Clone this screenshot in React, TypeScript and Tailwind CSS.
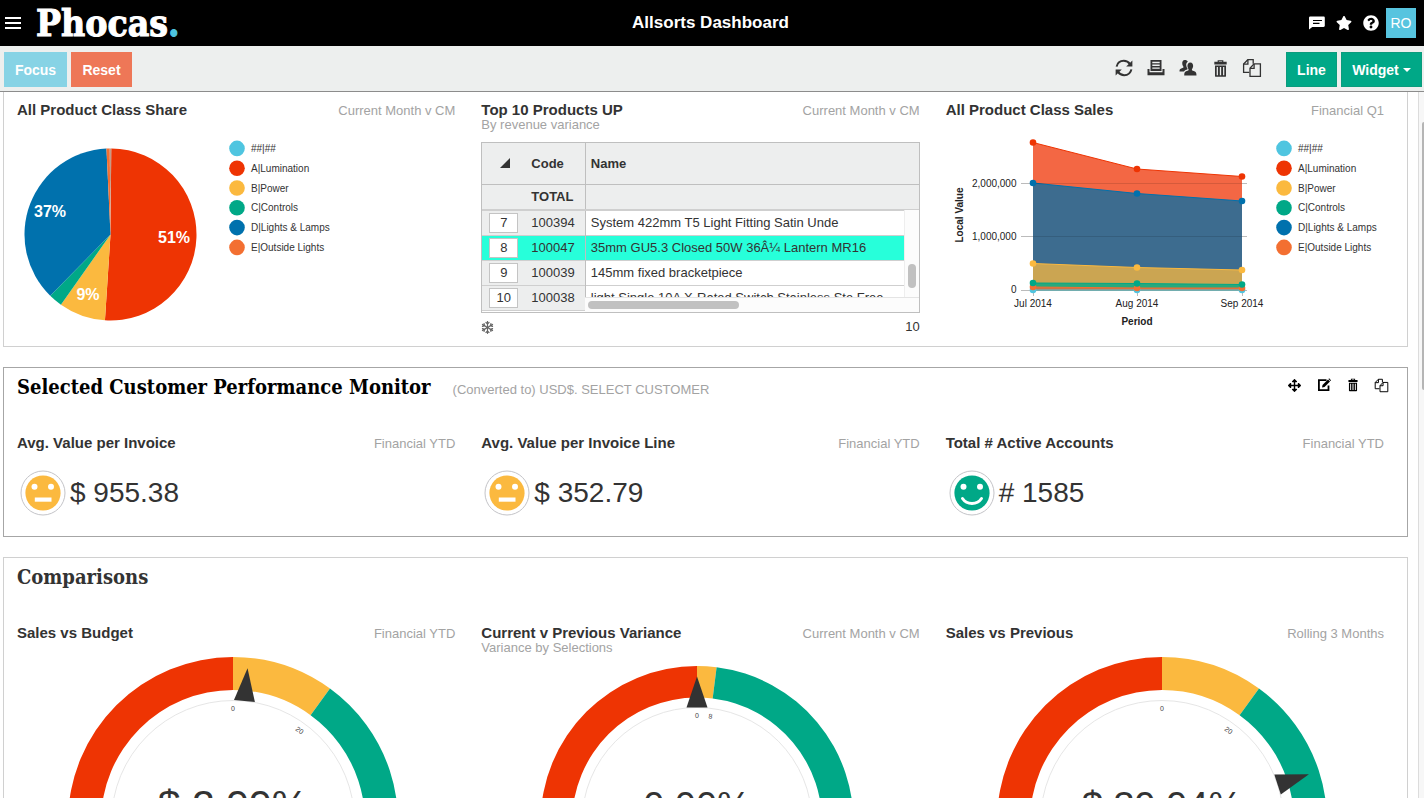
import React from "react";
import { FaStar, FaQuestionCircle, FaArrowsAlt, FaRegSnowflake } from "react-icons/fa";

const RED = "#ee3403";
const AMBER = "#fbb93f";
const GREEN = "#00a887";
const BLUE = "#0071ad";
const CYAN = "#4fc5e0";
const ORANGE = "#f36f31";

const SERIES = [
  { label: "##|##", color: CYAN },
  { label: "A|Lumination", color: RED },
  { label: "B|Power", color: AMBER },
  { label: "C|Controls", color: GREEN },
  { label: "D|Lights & Lamps", color: BLUE },
  { label: "E|Outside Lights", color: ORANGE },
];

function polar(cx: number, cy: number, r: number, deg: number): [number, number] {
  const a = (deg * Math.PI) / 180;
  return [cx + r * Math.sin(a), cy - r * Math.cos(a)];
}

/* ---------- icons ---------- */

function RefreshIcon() {
  return (
    <svg width="20" height="20" viewBox="0 0 20 20" fill="none" stroke="currentColor" strokeWidth="2">
      <path d="M2.6 8.6C3.4 5 6.4 2.8 9.8 2.8c2.700 0 4.800 1.300 6.200 3.300" />
      <path d="M17.4 11.4c-.8 3.600-3.800 5.800-7.200 5.800-2.700 0-4.800-1.300-6.200-3.300" />
      <path d="M18.400 2.400v6.200h-6.200z" fill="currentColor" stroke="none" />
      <path d="M1.600 17.600v-6.200h6.200z" fill="currentColor" stroke="none" />
    </svg>
  );
}

function PrintIcon() {
  return (
    <svg width="20" height="20" viewBox="0 0 20 20" fill="currentColor">
      <path fillRule="evenodd" d="M4.500 2h11v11h-11zM6.300 3.800v1.400h7.400V3.800zm0 2.800V8h7.400V6.600zm0 2.900v1.300h7.400V9.500z" />
      <path d="M1.500 11h2v3.200h13V11h2v6.200h-17z" />
    </svg>
  );
}

function PeopleIcon() {
  return (
    <svg width="20" height="20" viewBox="0 0 20 20" fill="currentColor">
      <path d="M6.800 2c1.500 0 2.600.7 3 1.700C8.400 4.600 8 6 8.300 7.800c.1 1 .6 1.900 1.200 2.600v.9c-1.300.6-2.700 1-3.600 2.100H1.500c0-2 .6-2.500 2.300-3.100 1-.4 1.700-.7 1.700-1.300 0-.6-.9-1.200-1.200-2.800C3.900 3.700 4.900 2 6.800 2z" />
      <path d="M12.300 4.500c2 0 3.100 1.700 2.800 4-.2 1.600-1.200 2.400-1.200 3.200 0 .7.7.9 1.800 1.300 1.900.7 2.800 1.300 2.800 4.500H6.200c0-3 .8-3.700 2.600-4.400 1.100-.4 1.800-.7 1.800-1.400 0-.8-.9-1.600-1.100-3.200-.3-2.300.8-4 2.800-4z" />
    </svg>
  );
}

function TrashIcon({ size }: { size: number }) {
  return (
    <svg width={size} height={size} viewBox="0 0 20 20" fill="currentColor">
      <path d="M7 1.200h6v1.600h3.500v3h-13v-3H7zM8.300 2.300v.7h3.400v-.7z" fillRule="evenodd" />
      <path
        fillRule="evenodd"
        d="M4.200 6.800h11.600v11c0 .6-.4 1-1 1H5.200c-.6 0-1-.4-1-1zM6 8.300v8.900h1.300V8.300zm3.300 0v8.900h1.400V8.300zm3.400 0v8.900H14V8.300z"
      />
    </svg>
  );
}

function PagesIcon({ size }: { size: number }) {
  return (
    <svg width={size} height={size} viewBox="0 0 20 20" fill="none" stroke="currentColor" strokeWidth="1.300">
      <path d="M7.300 14.300H1.600V6l4.200-4.300h5.400v4" />
      <path d="M1.600 6.200h4.300V1.700" />
      <path d="M8 10.200l4-4.300h6.400v12.400H8z" />
      <path d="M8 10.300h4.100V5.900" />
    </svg>
  );
}

function ChatIcon() {
  return (
    <svg width="18" height="18" viewBox="0 0 18 18">
      <path d="M2.500 2.500h13c.8 0 1.300.5 1.300 1.200v8.100c0 .7-.5 1.200-1.300 1.200H4.300L1 15.600V3.700c0-.7.700-1.200 1.500-1.200z" fill="#fff" />
      <path d="M5 6.500h9M5 9.300h6.500" stroke="#000" strokeWidth="1.200" />
    </svg>
  );
}

function EditIcon() {
  return (
    <svg width="14" height="14" viewBox="0 0 14 14" fill="none" stroke="currentColor">
      <path d="M9.500 2.200H1.900v10h9.600V7.500" strokeWidth="1.800" />
      <path d="M5 9.400l.5-2.500L11 1.400l2 2-5.500 5.500z" fill="currentColor" stroke="none" />
      <path d="M11.500.9l.6-.6 2 2-.6.600z" fill="currentColor" stroke="none" />
    </svg>
  );
}

function Face({ color, happy }: { color: string; happy?: boolean }) {
  return (
    <svg width="46" height="46" viewBox="0 0 46 46">
      <circle cx="23" cy="23" r="22" fill="#fff" stroke="#c4c4c8" />
      <circle cx="23" cy="23" r="17.600" fill={color} />
      <circle cx="14.500" cy="16.800" r="3" fill="#fff" />
      <circle cx="31" cy="16.800" r="3" fill="#fff" />
      {happy ? (
        <path d="M13.500 28.500c4.500 6.700 14.500 6.700 19 0" fill="none" stroke="#fff" strokeWidth="3" strokeLinecap="round" />
      ) : (
        <rect x="14.800" y="27.500" width="16.700" height="4.200" fill="#fff" />
      )}
    </svg>
  );
}

/* ---------- charts ---------- */

function Legend({ x }: { x: number }) {
  return (
    <g fontSize="10" fill="#333">
      {SERIES.map((s, i) => (
        <g key={s.label}>
          <circle cx={x} cy={15.4 + i * 19.8} r="7.800" fill={s.color} />
          <text x={x + 14} y={19 + i * 19.8}>
            {s.label}
          </text>
        </g>
      ))}
    </g>
  );
}

const SLICES = [
  { from: 0.5, to: 183.7, color: RED },
  { from: 183.7, to: 215.2, color: AMBER },
  { from: 215.2, to: 224.5, color: GREEN },
  { from: 224.5, to: 357.3, color: BLUE },
  { from: 357.3, to: 359.5, color: ORANGE },
  { from: 359.5, to: 360.5, color: "#c79a86" },
];

function PieChart() {
  const cx = 93.5;
  const cy = 101.5;
  const r = 86;
  return (
    <svg className="block h-[200px] w-[438px] max-w-full" viewBox="0 0 438 200" role="img" aria-label="All Product Class Share">
      {SLICES.map((s) => {
        const [x1, y1] = polar(cx, cy, r, s.from);
        const [x2, y2] = polar(cx, cy, r, s.to);
        const large = s.to - s.from > 180 ? 1 : 0;
        return <path key={s.from} d={`M${cx} ${cy}L${x1} ${y1}A${r} ${r} 0 ${large} 1 ${x2} ${y2}Z`} fill={s.color} />;
      })}
      <g fontSize="16" fontWeight="700" fill="#fff" textAnchor="middle">
        <text x="157" y="110">51%</text>
        <text x="33" y="84">37%</text>
        <text x="71" y="167">9%</text>
      </g>
      <Legend x={220} />
    </svg>
  );
}

const XS = [87, 191, 296];
const AREAS = [
  { ys: [9.5, 36, 43.5], fill: "#f36744", dot: RED },
  { ys: [50, 60.5, 68], fill: "#3d6c8f", dot: BLUE },
  { ys: [130.5, 134.5, 137], fill: "#cba552", dot: AMBER },
  { ys: [150, 150.5, 151.5], fill: "#28a97c", dot: GREEN },
  { ys: [154, 155, 155], fill: "#cf7245", dot: ORANGE },
  { ys: [157, 157, 157], fill: "#8f9fa0", dot: CYAN },
];

function AreaChart() {
  return (
    <svg className="block h-[200px] w-[438px] max-w-full" viewBox="0 0 438 200" role="img" aria-label="All Product Class Sales">
      <path d="M75 50.500h226M75 103.500h226M75 157.500h226" stroke="#bbb" />
      <path d="M87.500 157v6M191.500 157v6M296.500 157v6" stroke="#bbb" />
      {AREAS.map((a) => (
        <g key={a.dot}>
          <path d={`M${XS[0]} ${a.ys[0]}L${XS[1]} ${a.ys[1]}L${XS[2]} ${a.ys[2]}V157.500H${XS[0]}Z`} fill={a.fill} />
          <path d={`M${XS[0]} ${a.ys[0]}L${XS[1]} ${a.ys[1]}L${XS[2]} ${a.ys[2]}`} fill="none" stroke={a.dot} />
        </g>
      ))}
      <path d="M87 50.500h209M87 103.500h209" stroke="#000" strokeOpacity="0.120" />
      {[...AREAS].reverse().map((a) => (
        <g key={a.dot} fill={a.dot}>
          {XS.map((x, i) => (
            <circle key={x} cx={x} cy={a.ys[i]} r="3.300" />
          ))}
        </g>
      ))}
      <g fontSize="10" fill="#222">
        <g textAnchor="end">
          <text x="70.500" y="54">2,000,000</text>
          <text x="70.500" y="107">1,000,000</text>
          <text x="70.500" y="160">0</text>
        </g>
        <g textAnchor="middle">
          <text x="87" y="174">Jul 2014</text>
          <text x="191" y="174">Aug 2014</text>
          <text x="296" y="174">Sep 2014</text>
          <text x="191" y="192" fontWeight="700">Period</text>
          <text x="17" y="82" fontWeight="700" transform="rotate(-90 17 82)">Local Value</text>
        </g>
      </g>
      <Legend x={338} />
    </svg>
  );
}

interface GaugeProps {
  cy: number;
  r: number;
  inner: number;
  ring: number;
  mark: number;
  markLabel: string;
  needle: number;
  value: string;
  size: number;
}

function Gauge({ cy, r, inner, ring, mark, markLabel, needle, value, size }: GaugeProps) {
  const cx = 216;
  const bands = [
    { from: -180, to: 0, color: RED },
    { from: 0, to: mark, color: AMBER },
    { from: mark, to: 179, color: GREEN },
  ];
  return (
    <svg className="block h-[340px] w-[438px] max-w-full" viewBox="0 0 438 340" role="img" aria-label={value}>
      {bands.map((b) => {
        const [ax, ay] = polar(cx, cy, r, b.from);
        const [bx, by] = polar(cx, cy, r, b.to);
        const [px, py] = polar(cx, cy, inner, b.to);
        const [qx, qy] = polar(cx, cy, inner, b.from);
        return (
          <path
            key={b.color}
            fill={b.color}
            d={`M${ax} ${ay}A${r} ${r} 0 0 1 ${bx} ${by}L${px} ${py}A${inner} ${inner} 0 0 0 ${qx} ${qy}Z`}
          />
        );
      })}
      <circle cx={cx} cy={cy} r={ring} fill="#fff" stroke="#e6e6e6" />
      <g fontSize="7" fill="#444" textAnchor="middle">
        <text x={cx} y={cy - ring + 10.5}>0</text>
        <text x={cx} y={cy - ring + 10.5} transform={`rotate(${mark} ${cx} ${cy})`}>
          {markLabel}
        </text>
      </g>
      <path
        d={`M${cx} ${cy - r + 10.5}L${cx - 10.5} ${cy - ring}H${cx + 10.5}Z`}
        fill="#333"
        transform={`rotate(${needle} ${cx} ${cy})`}
      />
      <text x={cx} y="163" fontSize={size} fill="#333" textAnchor="middle">
        {value}
      </text>
    </svg>
  );
}

/* ---------- layout pieces ---------- */

interface WidgetProps {
  title: string;
  period: string;
  subtitle?: string;
  children: React.ReactNode;
}

function Widget({ title, period, subtitle, children }: WidgetProps) {
  return (
    <section className="min-w-0">
      <header className="flex min-h-8 items-start justify-between">
        <div>
          <h3 className="text-[15px] leading-[18px] font-bold text-[#333]">{title}</h3>
          {subtitle && <p className="text-[13px] leading-3 text-[#a3a3a3]">{subtitle}</p>}
        </div>
        <span className="text-[13px] leading-5 text-[#a3a3a3]">{period}</span>
      </header>
      {children}
    </section>
  );
}

const ROWS = [
  { n: 7, code: "100394", name: "System 422mm T5 Light Fitting Satin Unde" },
  { n: 8, code: "100047", name: "35mm GU5.3 Closed 50W 36Â¼ Lantern MR16", active: true },
  { n: 9, code: "100039", name: "145mm fixed bracketpiece" },
  { n: 10, code: "100038", name: "light Single 10A X-Rated Switch Stainless Ste Free" },
];

function ProductTable() {
  return (
    <div className="pt-[9px]">
      <div className="relative h-[171px] overflow-hidden border border-[#bfbfbf] bg-white">
        <table className="w-full table-fixed border-collapse text-[13px] text-[#333]">
          <colgroup>
            <col className="w-[43px]" />
            <col className="w-[60px]" />
            <col />
          </colgroup>
          <thead className="bg-[#edeeee] text-left">
            <tr className="h-[41px] border-b border-[#bfbfbf]">
              <th aria-label="Row" className="pl-[18px]">
                <svg width="10" height="10" viewBox="0 0 10 10">
                  <path d="M0 10L10 0v10z" fill="#333" />
                </svg>
              </th>
              <th className="border-r border-[#bfbfbf] pl-[6px]">Code</th>
              <th className="pl-[5px]">Name</th>
            </tr>
            <tr className="h-[26px] border-b-2 border-[#cfcfcf]">
              <th />
              <th className="border-r border-[#bfbfbf] pl-[6px]">TOTAL</th>
              <th />
            </tr>
          </thead>
          <tbody>
            {ROWS.map((r) => (
              <tr key={r.n} className={r.active ? "h-[25px] border-b border-[#cfcfcf] bg-[#27ffda]" : "h-[25px] border-b border-[#cfcfcf]"}>
                <td className={r.active ? "pl-[7px]" : "bg-[#edeeee] pl-[7px]"}>
                  <span className="flex h-5 w-[29px] items-center justify-center border border-[#c4c4c4] bg-white">{r.n}</span>
                </td>
                <td className={r.active ? "border-r border-[#bfbfbf] pl-[6px]" : "border-r border-[#bfbfbf] bg-[#edeeee] pl-[6px]"}>{r.code}</td>
                <td className="overflow-hidden pl-[5px] whitespace-nowrap">{r.name}</td>
              </tr>
            ))}
          </tbody>
        </table>
        <div className="absolute right-0 bottom-0 flex h-[102px] w-[15px] flex-col items-center border-l border-[#eee] bg-[#fcfcfc] pt-[54px]">
          <div className="h-6 w-2 rounded-full bg-[#c1c1c1]" />
        </div>
        <div className="absolute right-0 bottom-0 left-[103px] h-[15px] border-t border-[#e4e4e4] bg-[#fcfcfc] pt-[3px] pl-[3px]">
          <div className="h-2 w-[151px] rounded-full bg-[#c1c1c1]" />
        </div>
      </div>
      <div className="flex h-7 items-center justify-between text-[13px] text-[#333]">
        <FaRegSnowflake size={13} className="text-[#666]" />
        <span>10</span>
      </div>
    </div>
  );
}

function Value({ color, happy, text }: { color: string; happy?: boolean; text: string }) {
  return (
    <div className="flex items-center gap-1 pt-1 pl-[3px]">
      <Face color={color} happy={happy} />
      <span className="text-[28px] leading-8 text-[#333]">{text}</span>
    </div>
  );
}

function IconButton({ label, className, children }: { label: string; className: string; children: React.ReactNode }) {
  return (
    <button type="button" aria-label={label} className={`flex items-center justify-center ${className}`}>
      {children}
    </button>
  );
}

const SLAB = "font-['DejaVu_Serif_Condensed','DejaVu_Serif',serif] font-bold";

export default function App() {
  return (
    <div className="flex h-screen flex-col overflow-hidden bg-white font-['Liberation_Sans',Arial,sans-serif]">
      <header className="grid h-[46px] shrink-0 grid-cols-[1fr_auto_1fr] items-center bg-black pr-2 pl-[5px] text-white">
        <div className="flex items-center gap-[15px]">
          <IconButton label="Menu" className="h-6 w-4">
            <svg width="16" height="12" viewBox="0 0 16 12">
              <path d="M0 1h16M0 6h16M0 11h16" stroke="#fff" strokeWidth="2" />
            </svg>
          </IconButton>
          <a href="#" className={`text-[37px] leading-[46px] [-webkit-text-stroke:1px_currentColor] ${SLAB}`}>
            Phocas<span className="text-[#4fc5e0]">.</span>
          </a>
        </div>
        <h1 className="text-[17px] font-bold">Allsorts Dashboard</h1>
        <div className="flex items-center justify-end">
          <IconButton label="Messages" className="h-8 w-[27px]"><ChatIcon /></IconButton>
          <IconButton label="Favourites" className="h-8 w-[27px]"><FaStar size={16} /></IconButton>
          <IconButton label="Help" className="h-8 w-[27px]"><FaQuestionCircle size={16} /></IconButton>
          <button type="button" className="ml-[2px] h-[30px] w-[30px] bg-[#57c4df] text-sm">RO</button>
        </div>
      </header>

      <div className="flex h-[46px] shrink-0 items-start justify-between border-b border-[#8c8c8c] bg-[#edefee] pt-[6px] pr-[2px] pl-1 text-sm font-bold text-white">
        <div className="flex gap-1">
          <button type="button" className="h-[35px] w-[63px] bg-[#87d3e5]">Focus</button>
          <button type="button" className="h-[35px] w-[61px] bg-[#ee7757]">Reset</button>
        </div>
        <div className="flex items-start gap-1">
          <div className="mr-[14px] flex text-[#333]">
            <IconButton label="Refresh" className="h-8 w-8"><RefreshIcon /></IconButton>
            <IconButton label="Print" className="h-8 w-8"><PrintIcon /></IconButton>
            <IconButton label="Share" className="h-8 w-8"><PeopleIcon /></IconButton>
            <IconButton label="Delete" className="h-8 w-8"><TrashIcon size={19} /></IconButton>
            <IconButton label="Copy" className="h-8 w-8"><PagesIcon size={20} /></IconButton>
          </div>
          <button type="button" className="h-[35px] w-[51px] border border-[#0b9c7d] bg-[#00a887]">Line</button>
          <button type="button" className="flex h-[35px] w-[81px] items-center justify-center gap-1 border border-[#0b9c7d] bg-[#00a887]">
            Widget
            <svg width="8" height="4" viewBox="0 0 8 4"><path d="M0 0h8L4 4z" fill="#fff" /></svg>
          </button>
        </div>
      </div>

      <div className="flex min-h-0 flex-1">
        <main className="flex min-w-0 flex-1 flex-col gap-5 overflow-hidden pr-[10px] pl-[3px]">
          <div className="grid shrink-0 grid-cols-3 gap-[26px] border border-t-0 border-[#d0d0d0] pt-[9px] pr-[23px] pb-[5px] pl-[13px]">
            <Widget title="All Product Class Share" period="Current Month v CM"><PieChart /></Widget>
            <Widget title="Top 10 Products UP" subtitle="By revenue variance" period="Current Month v CM"><ProductTable /></Widget>
            <Widget title="All Product Class Sales" period="Financial Q1"><AreaChart /></Widget>
          </div>

          <div className="shrink-0 border border-[#a6a6a6]">
            <div className="flex h-[66px] items-start justify-between pt-[3px] pr-[11px] pl-[13px]">
              <div className="flex items-baseline gap-[22px]">
                <h2 className={`text-[20px] leading-8 text-black ${SLAB}`}>Selected Customer Performance Monitor</h2>
                <span className="text-[13px] text-[#a3a3a3]">(Converted to) USD$. SELECT CUSTOMER</span>
              </div>
              <div className="flex text-black">
                <IconButton label="Move" className="h-7 w-[29px]"><FaArrowsAlt size={13} /></IconButton>
                <IconButton label="Edit" className="h-7 w-[29px]"><EditIcon /></IconButton>
                <IconButton label="Delete" className="h-7 w-[29px]"><TrashIcon size={14} /></IconButton>
                <IconButton label="Copy" className="h-7 w-[29px]"><PagesIcon size={15} /></IconButton>
              </div>
            </div>
            <div className="grid grid-cols-3 gap-[26px] pr-[23px] pb-5 pl-[13px]">
              <Widget title="Avg. Value per Invoice" period="Financial YTD"><Value color={AMBER} text="$ 955.38" /></Widget>
              <Widget title="Avg. Value per Invoice Line" period="Financial YTD"><Value color={AMBER} text="$ 352.79" /></Widget>
              <Widget title="Total # Active Accounts" period="Financial YTD"><Value color={GREEN} happy text="# 1585" /></Widget>
            </div>
          </div>

          <div className="shrink-0 border border-[#d0d0d0]">
            <div className="flex h-[66px] items-start pt-[3px] pl-[13px]">
              <h2 className={`text-[20px] leading-8 text-[#333] ${SLAB}`}>Comparisons</h2>
            </div>
            <div className="grid grid-cols-3 gap-[26px] pr-[23px] pb-5 pl-[13px]">
              <Widget title="Sales vs Budget" period="Financial YTD">
                <Gauge cy={166} r={165} inner={132} ring={121.5} mark={36} markLabel="20" needle={5.4} value="$ 2.99%" size={41} />
              </Widget>
              <Widget title="Current v Previous Variance" subtitle="Variance by Selections" period="Current Month v CM">
                <Gauge cy={166.5} r={156.5} inner={125} ring={115} mark={7.2} markLabel="8" needle={0} value="0.00%" size={38} />
              </Widget>
              <Widget title="Sales vs Previous" period="Rolling 3 Months">
                <Gauge cy={166} r={165} inner={132} ring={121.5} mark={36} markLabel="20" needle={72} value="$ 39.94%" size={38} />
              </Widget>
            </div>
          </div>
        </main>
        <div className="flex w-[6px] shrink-0 justify-end border-l border-[#dcdcdc] bg-[#f7f7f7] pt-[30px]">
          <div className="h-[268px] w-[2px] rounded-l bg-[#b5b5b5]" />
        </div>
      </div>
    </div>
  );
}
